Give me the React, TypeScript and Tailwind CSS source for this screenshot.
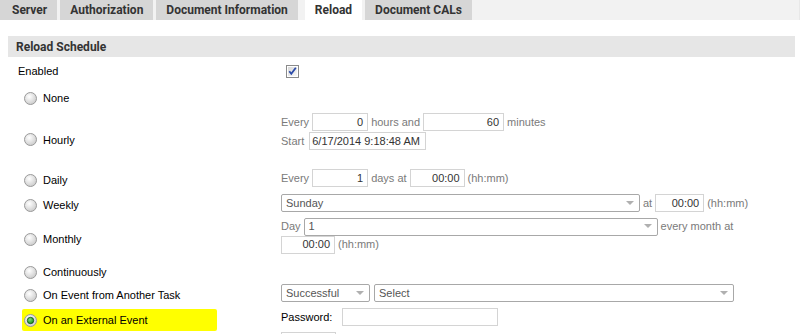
import React from "react";

const lbl = "font-['Liberation_Sans',Arial,sans-serif] text-[11px]";

function Radio({ checked = false }: { checked?: boolean }) {
  return (
    <svg width="13" height="13" viewBox="0 0 13 13" className="shrink-0">
      <defs>
        <radialGradient id={checked ? "rgc" : "rg"} cx="0.4" cy="0.35" r="0.7">
          <stop offset="0" stopColor="#ffffff" />
          <stop offset="1" stopColor="#c9c9c9" />
        </radialGradient>
        <radialGradient id="gdot" cx="0.4" cy="0.35" r="0.7">
          <stop offset="0" stopColor="#7be07b" />
          <stop offset="1" stopColor="#138a13" />
        </radialGradient>
      </defs>
      <circle cx="6.5" cy="6.5" r="6" fill={`url(#${checked ? "rgc" : "rg"})`} stroke="#9a9a9a" strokeWidth="1" />
      {checked && <circle cx="6.5" cy="6.5" r="3.2" fill="url(#gdot)" stroke="#0d4d0d" strokeWidth="0.8" />}
    </svg>
  );
}

function Checkbox() {
  return (
    <svg width="13" height="13" viewBox="0 0 13 13">
      <defs>
        <linearGradient id="cbg" x1="0" y1="0" x2="1" y2="1">
          <stop offset="0" stopColor="#d8d8d8" />
          <stop offset="1" stopColor="#f8f8f8" />
        </linearGradient>
      </defs>
      <rect x="0.5" y="0.5" width="12" height="12" fill="#fff" stroke="#8a8a8a" />
      <rect x="2" y="2" width="9" height="9" fill="url(#cbg)" />
      <path d="M3.3 6.3 L5.3 8.8 L9.8 2.8" fill="none" stroke="#2a4aa8" strokeWidth="1.8" />
    </svg>
  );
}

function Input({ w, value = "", align = "right" }: { w: number; value?: string; align?: "right" | "left" }) {
  return (
    <div
      className={`h-[18px] shrink-0 border border-[#d4d4d4] bg-white flex items-center whitespace-nowrap overflow-hidden text-[#333] ${lbl} ${
        align === "right" ? "justify-end px-[4px]" : "justify-start px-[2px]"
      }`}
      style={{ width: w }}
    >
      {value}
    </div>
  );
}

function Select({ w, value }: { w: number; value: string }) {
  return (
    <div
      className={`h-[18px] shrink-0 border border-[#a8a8a8] rounded-[2px] bg-white flex items-center justify-between pl-[4px] pr-[5px] text-[#555] ${lbl}`}
      style={{ width: w }}
    >
      <span>{value}</span>
      <svg width="8" height="5" viewBox="0 0 8 5">
        <path d="M0 0 L8 0 L4 4 Z" fill="#b0b0b0" />
      </svg>
    </div>
  );
}

function Gray({ children }: { children: React.ReactNode }) {
  return <span className={`text-[#7a7a7a] whitespace-nowrap ${lbl}`}>{children}</span>;
}

function LeftLabel({ children, checked }: { children: React.ReactNode; checked?: boolean }) {
  return (
    <div className="flex items-center gap-[6px] pl-[24px]">
      <Radio checked={checked} />
      <span className={`text-black whitespace-nowrap ${lbl}`}>{children}</span>
    </div>
  );
}

export default function App() {
  const tabs = ["Server", "Authorization", "Document Information", "Reload", "Document CALs"];
  return (
    <div className="w-[801px] h-[334px] bg-white overflow-hidden">
      <div className="h-[20px] bg-[#f2f2f2] flex gap-[3px] mr-[1px] border-r border-[#e8e8e8]">
        {tabs.map((t, i) => (
          <div
            key={t}
            className={`h-[20px] flex items-center font-['Roboto',Arial,sans-serif] font-bold text-[12px] text-[#333] ${
              t === "Reload" ? "bg-white px-[10px] ml-[4px]" : "bg-[#d6d6d6] px-[10px]"
            } ${i === 0 ? "pl-[12px]" : ""}`}
          >
            {t}
          </div>
        ))}
      </div>

      <div className="mt-[16px] ml-[8px] mr-[6px] h-[21px] bg-[#e6e6e6] flex items-center pl-[8px] font-['Roboto',Arial,sans-serif] font-bold text-[12px] text-[#333]">
        Reload Schedule
      </div>

      {/* Enabled */}
      <div className="flex items-center h-[18px] mt-[5px]">
        <div className={`w-[286px] pl-[18px] text-black ${lbl}`}>Enabled</div>
        <Checkbox />
      </div>

      {/* None */}
      <div className="flex items-center h-[20px] mt-[8px]">
        <div className="w-[281px]">
          <LeftLabel>None</LeftLabel>
        </div>
      </div>

      {/* Hourly */}
      <div className="flex items-end h-[39px] mt-[5px]">
        <div className="w-[281px] pb-[4px]">
          <LeftLabel>Hourly</LeftLabel>
        </div>
        <div className="flex flex-col gap-[1px] self-start">
          <div className="flex items-center gap-[3px]">
            <Gray>Every</Gray>
            <Input w={56} value="0" />
            <Gray>hours and</Gray>
            <Input w={81} value="60" />
            <Gray>minutes</Gray>
          </div>
          <div className="flex items-center gap-[5px]">
            <Gray>Start</Gray>
            <Input w={117} value="6/17/2014 9:18:48 AM" align="left" />
          </div>
        </div>
      </div>

      {/* Daily */}
      <div className="flex items-center h-[18px] mt-[17px]">
        <div className="w-[281px] pt-[5px]">
          <LeftLabel>Daily</LeftLabel>
        </div>
        <div className="flex items-center gap-[3px]">
          <Gray>Every</Gray>
          <Input w={56} value="1" />
          <Gray>days at</Gray>
          <Input w={55} value="00:00" />
          <Gray>(hh:mm)</Gray>
        </div>
      </div>

      {/* Weekly */}
      <div className="flex items-center h-[18px] mt-[7px]">
        <div className="w-[281px] pt-[4px]">
          <LeftLabel>Weekly</LeftLabel>
        </div>
        <div className="flex items-center gap-[3px]">
          <Select w={359} value="Sunday" />
          <Gray>at</Gray>
          <Input w={49} value="00:00" />
          <Gray>(hh:mm)</Gray>
        </div>
      </div>

      {/* Monthly */}
      <div className="flex items-center h-[35px] mt-[6px]">
        <div className="w-[281px] pt-[7px]">
          <LeftLabel>Monthly</LeftLabel>
        </div>
        <div className="flex flex-col">
          <div className="flex items-center gap-[3px]">
            <Gray>Day</Gray>
            <Select w={354} value="1" />
            <Gray>every month at</Gray>
          </div>
          <div className="flex items-center gap-[3px]">
            <Input w={54} value="00:00" />
            <Gray>(hh:mm)</Gray>
          </div>
        </div>
      </div>

      {/* Continuously */}
      <div className="flex items-center h-[18px] mt-[9px]">
        <div className="w-[281px] pt-[3px]">
          <LeftLabel>Continuously</LeftLabel>
        </div>
      </div>

      {/* On Event from Another Task */}
      <div className="flex items-center h-[18px] mt-[4px]">
        <div className="w-[281px] pt-[5px]">
          <LeftLabel>On Event from Another Task</LeftLabel>
        </div>
        <div className="flex items-center gap-[4px]">
          <Select w={89} value="Successful" />
          <Select w={360} value="Select" />
        </div>
      </div>

      {/* On an External Event */}
      <div className="flex items-center h-[18px] mt-[6px]">
        <div className="w-[281px] pt-[6px]">
          <div className="ml-[22px] w-[195px] h-[22px] bg-[#ffff00] flex items-center gap-[6px] pl-[2px] rounded-[2px]">
            <Radio checked />
            <span className={`text-black whitespace-nowrap ${lbl}`}>On an External Event</span>
          </div>
        </div>
        <div className="flex items-center gap-[10px]">
          <span className={`text-black ${lbl}`}>Password:</span>
          <Input w={156} value="" />
        </div>
      </div>
      <div className="ml-[281px] mt-[6px] w-[55px] h-[18px] border border-[#d4d4d4]" />
    </div>
  );
}
